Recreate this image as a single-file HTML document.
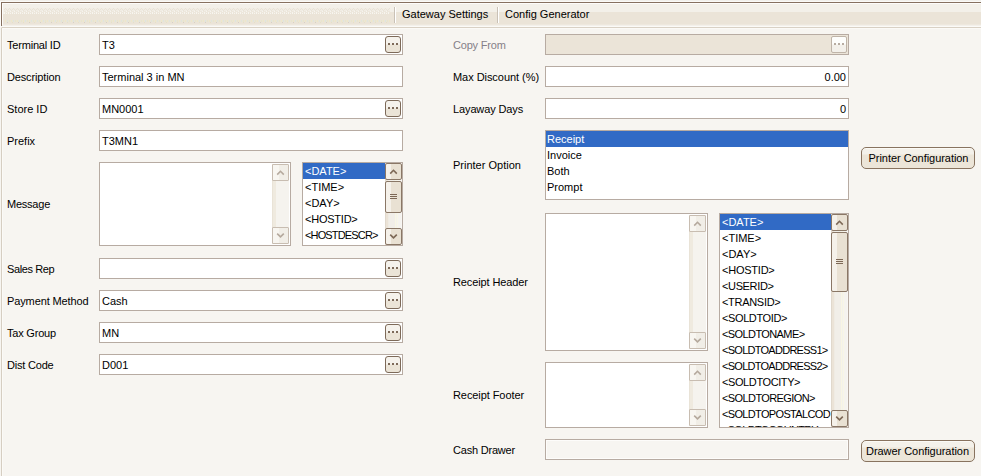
<!DOCTYPE html><html><head><meta charset="utf-8"><style>
*{margin:0;padding:0}
html,body{width:981px;height:476px;overflow:hidden;background:#f7f5f1}
body{position:relative;font-family:"Liberation Sans",sans-serif;font-size:11px}
div{position:absolute;box-sizing:border-box}
.t{line-height:12px;white-space:pre}
.db{width:16px;height:17px;border:1px solid #7d6a59;border-radius:3px;background:linear-gradient(#f5f2ec 0,#f5f2ec 7px,#ebe4d7 8px,#ebe4d7 100%)}
.db i{position:absolute;top:6px;width:2px;height:2px;background:#7d6a59}
.db.dis{border-radius:2px;border-color:#bfb4a8;background:linear-gradient(#fdfdfb 0,#fdfdfb 7px,#f3f0ea 8px)}
.db.dis i{background:#b7aca1}
.sbb{width:17px;height:17px;border:1px solid #8a7766;border-radius:2px;background:linear-gradient(to right,#f5f1ea 0,#f5f1ea 5px,#e9e1d3 5px)}
.sbb svg{position:absolute;left:-1px;top:-1px}
.sbb.dis{border-radius:1px;border-color:#c8bdb1;background:linear-gradient(to right,#f8f6f1 0,#f8f6f1 6px,#f1eee7 6px)}
.thumb{width:17px;border:1px solid #8a7766;border-radius:2px;background:linear-gradient(to right,#f5f1ea 0,#f5f1ea 5px,#e9e1d3 5px)}
.thumb b{position:absolute;left:4px;width:7px;height:1px;background:#7d6856}
.btn{border:1px solid #88735f;border-radius:5px;background:linear-gradient(#fbfaf6 0 1px,#f4f1ea 1px 6px,#ece5d8 7px)}
.btn span{position:absolute;right:0;letter-spacing:-0.05px;text-align:center;line-height:12px;white-space:pre}
</style></head><body><div style="left:0px;top:0px;width:981px;height:1px;background:#f2f0eb"></div><div style="left:0px;top:0px;width:5px;height:1px;background:#eeebe3"></div><div style="left:0px;top:1px;width:981px;height:1px;background:#fbfaf7"></div><div style="left:0px;top:2px;width:1px;height:25px;background:#fdfcfa"></div><div style="left:1px;top:2px;width:980px;height:1px;background:#86705f"></div><div style="left:1px;top:2px;width:1px;height:24px;background:#86705f"></div><div style="left:2px;top:3px;width:979px;height:1px;background:#fdfcfa"></div><div style="left:2px;top:3px;width:1px;height:22px;background:#fdfcfa"></div><div style="left:3px;top:4px;width:978px;height:8px;background:#f3f0e9"></div><div style="left:3px;top:12px;width:978px;height:12px;background:#ebe4d8"></div><div style="left:3px;top:24px;width:978px;height:1px;background:#eee8de"></div><div style="left:3px;top:4px;width:387px;height:10px;background:#f3f0e9"></div><svg style="position:absolute;left:4px;top:8px" width="386" height="5"><defs><pattern id="zz" width="8" height="5" patternUnits="userSpaceOnUse"><rect width="8" height="5" fill="#f1ede5"/><rect x="1" y="0" width="1" height="1" fill="#e9e3d7"/><rect x="5" y="0" width="1" height="1" fill="#e9e3d7"/><rect x="2" y="1" width="1" height="1" fill="#e9e3d7"/><rect x="4" y="1" width="1" height="1" fill="#e9e3d7"/><rect x="6" y="1" width="1" height="1" fill="#e9e3d7"/><rect x="0" y="1" width="1" height="1" fill="#e9e3d7"/><rect x="3" y="2" width="1" height="1" fill="#e9e3d7"/><rect x="7" y="2" width="1" height="1" fill="#e9e3d7"/><rect x="0" y="3" width="8" height="2" fill="#ede7dc"/><rect x="2" y="3" width="1" height="1" fill="#f6f4ee"/><rect x="6" y="3" width="1" height="1" fill="#f6f4ee"/><rect x="0" y="4" width="1" height="1" fill="#f6f4ee"/><rect x="4" y="4" width="1" height="1" fill="#f6f4ee"/></pattern></defs><rect width="386" height="5" fill="url(#zz)"/></svg><div style="left:4px;top:13px;width:386px;height:1px;background:repeating-linear-gradient(to right,#f7f5ef 0 1px,#ebe4d8 1px 2px)"></div><div style="left:4px;top:20px;width:386px;height:2px;background:repeating-linear-gradient(to right,#ebe4d8 0 1px,#eee8c8 1px 2px,#ebe4d8 2px 3px,#dfe6dc 3px 4px,#ebe4d8 4px 5px,#e8e6cc 5px 6px)"></div><div style="left:4px;top:22px;width:386px;height:1px;background:repeating-linear-gradient(to right,#ebe4d8 0 3px,#d8d0c6 3px 4px,#ebe4d8 4px 8px,#e6e0c8 8px 9px,#ebe4d8 9px 11px)"></div><div style="left:2px;top:25px;width:979px;height:1px;background:#f3f0ea"></div><div style="left:2px;top:26px;width:979px;height:1px;background:#fbfaf7"></div><div style="left:1px;top:27px;width:980px;height:1px;background:#d9d1c5"></div><div style="left:1px;top:27px;width:1px;height:449px;background:#d6cec2"></div><div style="left:1px;top:27px;width:1px;height:1px;background:#e8e2d8"></div><div style="left:2px;top:28px;width:979px;height:1px;background:#fbfaf7"></div><div style="left:2px;top:28px;width:1px;height:448px;background:#fbfaf7"></div><div style="left:394px;top:7px;width:1px;height:16px;background:#c9c1b6"></div><div style="left:395px;top:7px;width:1px;height:16px;background:#fff"></div><div style="left:497px;top:7px;width:1px;height:16px;background:#c9c1b6"></div><div style="left:498px;top:7px;width:1px;height:16px;background:#fff"></div><div class="t" style="left:402px;top:8px;color:#000;">Gateway Settings</div><div class="t" style="left:505px;top:8px;color:#000;">Config Generator</div><div class="t" style="left:7px;top:39px;color:#000;letter-spacing:-0.2px;">Terminal ID</div><div style="left:99px;top:34px;width:304px;height:21px;background:#fff;border:1px solid #b7aba2;box-sizing:border-box;"></div><div class="t" style="left:102px;top:39px;color:#000;">T3</div><div class="db" style="left:385px;top:36px"><i style="left:2px"></i><i style="left:6px"></i><i style="left:10px"></i></div><div class="t" style="left:7px;top:71px;color:#000;letter-spacing:-0.15px;">Description</div><div style="left:99px;top:66px;width:304px;height:21px;background:#fff;border:1px solid #b7aba2;box-sizing:border-box;"></div><div class="t" style="left:102px;top:71px;color:#000;">Terminal 3 in MN</div><div class="t" style="left:7px;top:103px;color:#000;">Store ID</div><div style="left:99px;top:98px;width:304px;height:21px;background:#fff;border:1px solid #b7aba2;box-sizing:border-box;"></div><div class="t" style="left:102px;top:103px;color:#000;">MN0001</div><div class="db" style="left:385px;top:100px"><i style="left:2px"></i><i style="left:6px"></i><i style="left:10px"></i></div><div class="t" style="left:7px;top:135px;color:#000;">Prefix</div><div style="left:99px;top:130px;width:304px;height:21px;background:#fff;border:1px solid #b7aba2;box-sizing:border-box;"></div><div class="t" style="left:102px;top:135px;color:#000;">T3MN1</div><div class="t" style="left:7px;top:198px;color:#000;letter-spacing:-0.23px;">Message</div><div style="left:99px;top:162px;width:192px;height:84px;background:#fff;border:1px solid #b7aba2;box-sizing:border-box"></div><div style="left:272px;top:164px;width:17px;height:80px;background:linear-gradient(to right,#e9e3d7 0,#e9e3d7 1px,#efeadf 1px,#efeadf 4px,#f5f3ee 4px)"></div><div class="sbb dis" style="left:272px;top:164px"><svg width="17" height="17" viewBox="0 0 17 17"><path d="M5.2 10.6 L8.5 7.3 L11.8 10.6" fill="none" stroke="#b5a99d" stroke-width="1.6"/></svg></div><div class="sbb dis" style="left:272px;top:227px"><svg width="17" height="17" viewBox="0 0 17 17"><path d="M5.2 6.6 L8.5 9.9 L11.8 6.6" fill="none" stroke="#b5a99d" stroke-width="1.6"/></svg></div><div style="left:302px;top:162px;width:101px;height:84px;background:#fff;border:1px solid #b7aba2;box-sizing:border-box"></div><div style="left:303px;top:163px;width:82px;height:82px;overflow:hidden"><div style="left:0;top:0px;width:82px;height:16px;background:#316ac5"></div><div class="t" style="left:2px;top:2px;color:#fff;">&lt;DATE&gt;</div><div class="t" style="left:2px;top:18px;color:#000;">&lt;TIME&gt;</div><div class="t" style="left:2px;top:34px;color:#000;">&lt;DAY&gt;</div><div class="t" style="left:2px;top:50px;color:#000;letter-spacing:-0.23px;">&lt;HOSTID&gt;</div><div class="t" style="left:2px;top:66px;color:#000;letter-spacing:-0.85px;">&lt;HOSTDESCR&gt;</div><div class="t" style="left:2px;top:82px;color:#000;">&lt;HOSTADDR&gt;</div></div><div style="left:385px;top:163px;width:17px;height:82px;background:linear-gradient(to right,#e0d8cc 0 1px,#ebe3d7 1px 3px,#efebe3 3px 4px,#f1eee8 4px 10px,#f8f6e4 10px 11px,#f3f1ec 11px 12px,#f8f6e6 12px 13px,#f5f3ef 13px 16px,#f8f6f3 16px 17px)"></div><div class="sbb" style="left:385px;top:163px"><svg width="17" height="17" viewBox="0 0 17 17"><path d="M5.2 10.6 L8.5 7.3 L11.8 10.6" fill="none" stroke="#7d6856" stroke-width="1.6"/></svg></div><div class="sbb" style="left:385px;top:228px"><svg width="17" height="17" viewBox="0 0 17 17"><path d="M5.2 6.6 L8.5 9.9 L11.8 6.6" fill="none" stroke="#7d6856" stroke-width="1.6"/></svg></div><div class="thumb" style="left:385px;top:181px;height:32px"><b style="top:12px"></b><b style="top:14px"></b><b style="top:16px"></b></div><div class="t" style="left:7px;top:263px;color:#000;letter-spacing:-0.4px;">Sales Rep</div><div style="left:99px;top:258px;width:304px;height:21px;background:#fff;border:1px solid #b7aba2;box-sizing:border-box;"></div><div class="db" style="left:385px;top:260px"><i style="left:2px"></i><i style="left:6px"></i><i style="left:10px"></i></div><div class="t" style="left:7px;top:295px;color:#000;letter-spacing:-0.12px;">Payment Method</div><div style="left:99px;top:290px;width:304px;height:21px;background:#fff;border:1px solid #b7aba2;box-sizing:border-box;"></div><div class="t" style="left:102px;top:295px;color:#000;">Cash</div><div class="db" style="left:385px;top:292px"><i style="left:2px"></i><i style="left:6px"></i><i style="left:10px"></i></div><div class="t" style="left:7px;top:327px;color:#000;letter-spacing:-0.2px;">Tax Group</div><div style="left:99px;top:322px;width:304px;height:21px;background:#fff;border:1px solid #b7aba2;box-sizing:border-box;"></div><div class="t" style="left:102px;top:327px;color:#000;">MN</div><div class="db" style="left:385px;top:324px"><i style="left:2px"></i><i style="left:6px"></i><i style="left:10px"></i></div><div class="t" style="left:7px;top:359px;color:#000;letter-spacing:-0.2px;">Dist Code</div><div style="left:99px;top:354px;width:304px;height:21px;background:#fff;border:1px solid #b7aba2;box-sizing:border-box;"></div><div class="t" style="left:102px;top:359px;color:#000;">D001</div><div class="db" style="left:385px;top:356px"><i style="left:2px"></i><i style="left:6px"></i><i style="left:10px"></i></div><div class="t" style="left:453px;top:39px;color:#858088;letter-spacing:-0.2px;">Copy From</div><div style="left:545px;top:34px;width:304px;height:21px;background:#ebe4d8;border:1px solid #b7aba2;box-sizing:border-box;"></div><div class="db dis" style="left:831px;top:36px"><i style="left:2px"></i><i style="left:6px"></i><i style="left:10px"></i></div><div class="t" style="left:453px;top:71px;color:#000;letter-spacing:-0.05px;">Max Discount (%)</div><div style="left:545px;top:66px;width:304px;height:21px;background:#fff;border:1px solid #b7aba2;box-sizing:border-box;"></div><div class="t" style="left:646px;width:200px;text-align:right;top:71px;color:#000;">0.00</div><div class="t" style="left:453px;top:103px;color:#000;letter-spacing:-0.12px;">Layaway Days</div><div style="left:545px;top:98px;width:304px;height:21px;background:#fff;border:1px solid #b7aba2;box-sizing:border-box;"></div><div class="t" style="left:646px;width:200px;text-align:right;top:103px;color:#000;">0</div><div class="t" style="left:453px;top:159px;color:#000;">Printer Option</div><div style="left:545px;top:130px;width:304px;height:70px;background:#fff;border:1px solid #b7aba2;box-sizing:border-box"></div><div style="left:546px;top:131px;width:302px;height:68px;overflow:hidden"><div style="left:0;top:0px;width:302px;height:16px;background:#316ac5"></div><div class="t" style="left:1px;top:2px;color:#fff;">Receipt</div><div class="t" style="left:1px;top:18px;color:#000;">Invoice</div><div class="t" style="left:1px;top:34px;color:#000;">Both</div><div class="t" style="left:1px;top:50px;color:#000;">Prompt</div></div><div class="btn" style="left:861px;top:147px;width:114px;height:22px"><span style="top:4px;left:1px">Printer Configuration</span></div><div class="t" style="left:453px;top:276px;color:#000;letter-spacing:-0.12px;">Receipt Header</div><div style="left:545px;top:213px;width:163px;height:138px;background:#fff;border:1px solid #b7aba2;box-sizing:border-box"></div><div style="left:689px;top:215px;width:17px;height:134px;background:linear-gradient(to right,#e9e3d7 0,#e9e3d7 1px,#efeadf 1px,#efeadf 4px,#f5f3ee 4px)"></div><div class="sbb dis" style="left:689px;top:215px"><svg width="17" height="17" viewBox="0 0 17 17"><path d="M5.2 10.6 L8.5 7.3 L11.8 10.6" fill="none" stroke="#b5a99d" stroke-width="1.6"/></svg></div><div class="sbb dis" style="left:689px;top:332px"><svg width="17" height="17" viewBox="0 0 17 17"><path d="M5.2 6.6 L8.5 9.9 L11.8 6.6" fill="none" stroke="#b5a99d" stroke-width="1.6"/></svg></div><div style="left:719px;top:213px;width:130px;height:215px;background:#fff;border:1px solid #b7aba2;box-sizing:border-box"></div><div style="left:720px;top:214px;width:111px;height:213px;overflow:hidden"><div style="left:0;top:0px;width:111px;height:16px;background:#316ac5"></div><div class="t" style="left:2px;top:2px;color:#fff;">&lt;DATE&gt;</div><div class="t" style="left:2px;top:18px;color:#000;">&lt;TIME&gt;</div><div class="t" style="left:2px;top:34px;color:#000;">&lt;DAY&gt;</div><div class="t" style="left:2px;top:50px;color:#000;letter-spacing:-0.23px;">&lt;HOSTID&gt;</div><div class="t" style="left:2px;top:66px;color:#000;letter-spacing:-0.36px;">&lt;USERID&gt;</div><div class="t" style="left:2px;top:82px;color:#000;letter-spacing:-0.3px;">&lt;TRANSID&gt;</div><div class="t" style="left:2px;top:98px;color:#000;letter-spacing:-0.39px;">&lt;SOLDTOID&gt;</div><div class="t" style="left:2px;top:114px;color:#000;letter-spacing:-0.6px;">&lt;SOLDTONAME&gt;</div><div class="t" style="left:2px;top:130px;color:#000;letter-spacing:-0.73px;">&lt;SOLDTOADDRESS1&gt;</div><div class="t" style="left:2px;top:146px;color:#000;letter-spacing:-0.73px;">&lt;SOLDTOADDRESS2&gt;</div><div class="t" style="left:2px;top:162px;color:#000;letter-spacing:-0.4px;">&lt;SOLDTOCITY&gt;</div><div class="t" style="left:2px;top:178px;color:#000;letter-spacing:-0.6px;">&lt;SOLDTOREGION&gt;</div><div class="t" style="left:2px;top:194px;color:#000;letter-spacing:-0.66px;">&lt;SOLDTOPOSTALCOD</div><div class="t" style="left:2px;top:210px;color:#000;letter-spacing:-0.7px;">&lt;SOLDTOCOUNTRY&gt;</div></div><div style="left:831px;top:214px;width:17px;height:213px;background:linear-gradient(to right,#e0d8cc 0 1px,#ebe3d7 1px 3px,#efebe3 3px 4px,#f1eee8 4px 10px,#f8f6e4 10px 11px,#f3f1ec 11px 12px,#f8f6e6 12px 13px,#f5f3ef 13px 16px,#f8f6f3 16px 17px)"></div><div class="sbb" style="left:831px;top:214px"><svg width="17" height="17" viewBox="0 0 17 17"><path d="M5.2 10.6 L8.5 7.3 L11.8 10.6" fill="none" stroke="#7d6856" stroke-width="1.6"/></svg></div><div class="sbb" style="left:831px;top:410px"><svg width="17" height="17" viewBox="0 0 17 17"><path d="M5.2 6.6 L8.5 9.9 L11.8 6.6" fill="none" stroke="#7d6856" stroke-width="1.6"/></svg></div><div class="thumb" style="left:831px;top:232px;height:60px"><b style="top:26px"></b><b style="top:28px"></b><b style="top:30px"></b></div><div class="t" style="left:453px;top:389px;color:#000;letter-spacing:-0.08px;">Receipt Footer</div><div style="left:545px;top:362px;width:163px;height:66px;background:#fff;border:1px solid #b7aba2;box-sizing:border-box"></div><div style="left:689px;top:364px;width:17px;height:62px;background:linear-gradient(to right,#e9e3d7 0,#e9e3d7 1px,#efeadf 1px,#efeadf 4px,#f5f3ee 4px)"></div><div class="sbb dis" style="left:689px;top:364px"><svg width="17" height="17" viewBox="0 0 17 17"><path d="M5.2 10.6 L8.5 7.3 L11.8 10.6" fill="none" stroke="#b5a99d" stroke-width="1.6"/></svg></div><div class="sbb dis" style="left:689px;top:409px"><svg width="17" height="17" viewBox="0 0 17 17"><path d="M5.2 6.6 L8.5 9.9 L11.8 6.6" fill="none" stroke="#b5a99d" stroke-width="1.6"/></svg></div><div class="t" style="left:453px;top:444px;color:#000;letter-spacing:-0.2px;">Cash Drawer</div><div style="left:545px;top:439px;width:304px;height:21px;background:#f7f5f1;border:1px solid #b7aba2;box-sizing:border-box;box-shadow:inset 0 0 0 1px #fdfcfa"></div><div class="btn" style="left:861px;top:440px;width:114px;height:22px"><span style="top:4px;left:-1px">Drawer Configuration</span></div></body></html>
